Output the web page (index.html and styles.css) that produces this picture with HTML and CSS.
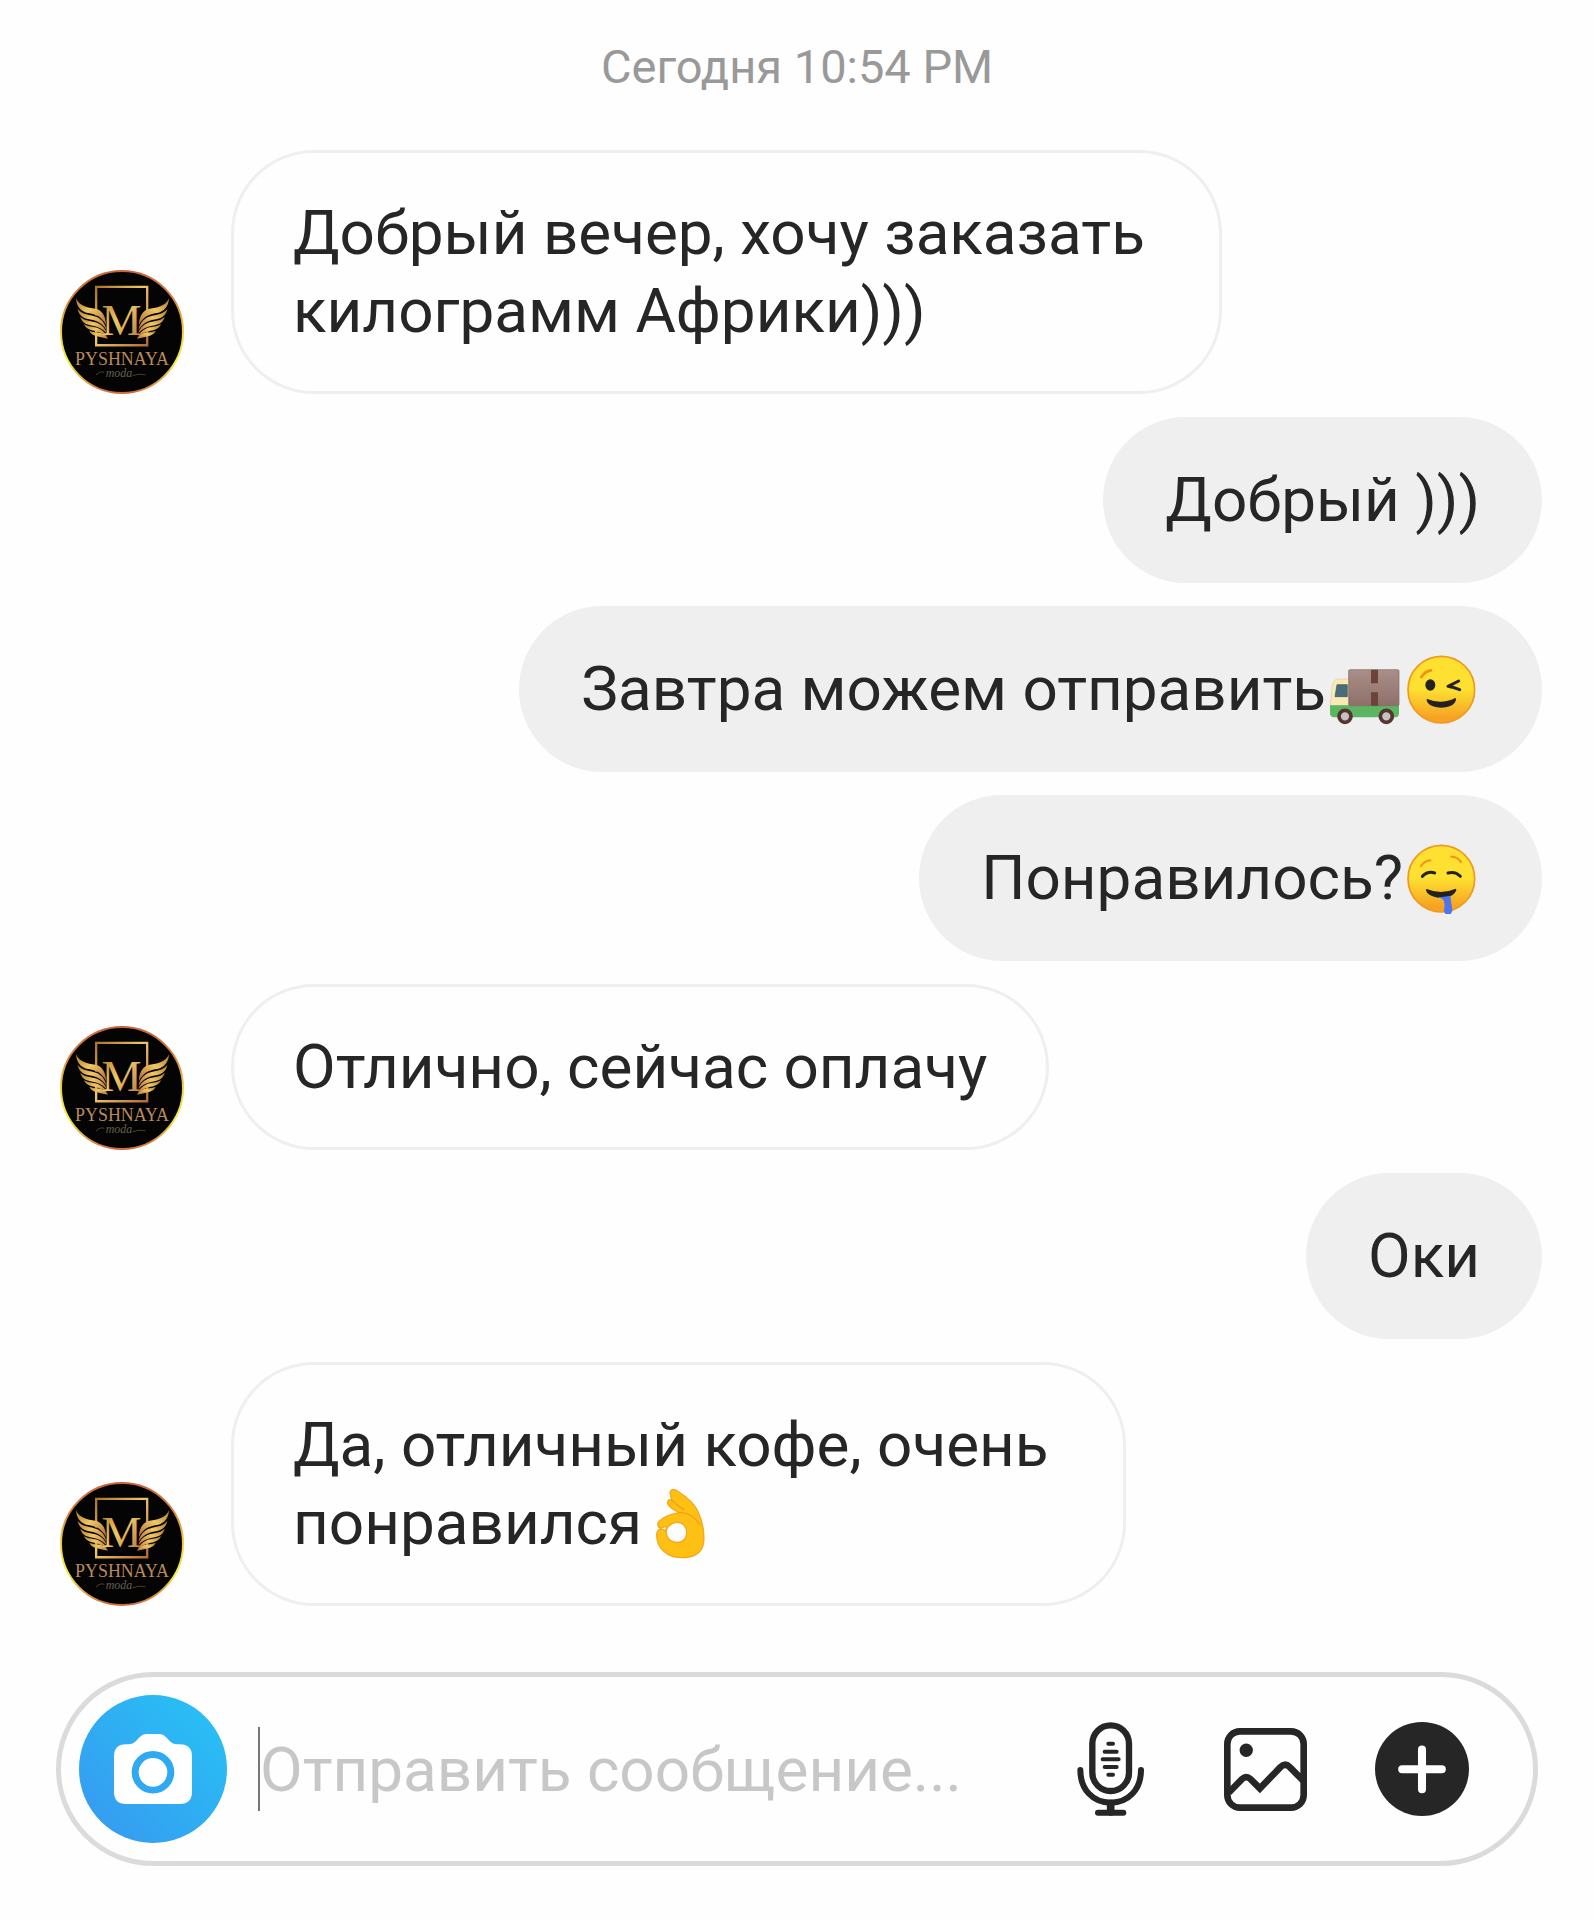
FILE: index.html
```html
<!DOCTYPE html>
<html lang="ru">
<head>
    <meta charset="UTF-8">
    <meta name="viewport" content="width=device-width, initial-scale=1.0">
    <title>Сообщения</title>
    <link rel="stylesheet" href="styles.css">
</head>
<body>

    <!-- shapes and gradients shared by the avatars and emoji -->
    <svg class="sprite" aria-hidden="true">
        <defs>
            <linearGradient id="ring" x1="0" y1="0" x2="0" y2="1">
                <stop offset="0" stop-color="#c8643c"/>
                <stop offset=".25" stop-color="#d9853c"/>
                <stop offset=".5" stop-color="#f0d040"/>
                <stop offset=".75" stop-color="#f2ef3c"/>
                <stop offset="1" stop-color="#cf6a3c"/>
            </linearGradient>
            <linearGradient id="gold" x1="0" y1="0" x2="1" y2="1">
                <stop offset="0" stop-color="#a8742c"/>
                <stop offset=".45" stop-color="#f0c765"/>
                <stop offset="1" stop-color="#b36b33"/>
            </linearGradient>
            <linearGradient id="face" x1="0" y1="0" x2="0" y2="1">
                <stop offset=".5" stop-color="#fde030"/>
                <stop offset=".92" stop-color="#f7a223"/>
            </linearGradient>
            <linearGradient id="cargo" x1="0" y1="0" x2="0" y2="1">
                <stop offset="0" stop-color="#a98f88"/>
                <stop offset="1" stop-color="#8d7069"/>
            </linearGradient>
        </defs>
        <symbol id="logo" viewBox="28 28 374 374">
            <circle cx="215" cy="215" r="184" fill="#050404" stroke="url(#ring)" stroke-width="6"/>
            <path d="M137 165V79H291V158M137 205V255H291V205" fill="none" stroke="url(#gold)" stroke-width="7"/>
            <g id="wing" fill="url(#gold)">
                <path d="M76 113C88 138 110 140 135 145C157 150 166 169 167 194C152 166 135 163 113 158C91 153 78 139 76 113Z"/>
                <path d="M81 145C94 164 119 162 139 170C156 178 166 193 168 208C151 184 133 180 112 176C95 172 84 162 81 145Z"/>
                <path d="M89 169C104 184 123 180 141 188C157 196 166 206 169 219C151 201 134 197 117 194C102 191 93 183 89 169Z"/>
                <path d="M100 191C115 201 130 197 146 205C158 211 166 219 170 229C153 217 138 213 124 210C112 207 104 201 100 191Z"/>
                <path d="M116 211C129 217 141 214 153 219C163 223 169 228 173 235C157 231 145 230 134 226C125 223 119 218 116 211Z"/>
            </g>
            <use href="#wing" transform="translate(433 0) scale(-1 1)"/>
            <path d="M136 345q14-14 26-8M246 347q20-8 40-3" fill="none" stroke="#66604f" stroke-width="2"/>
        </symbol>
    </svg>

    <time class="date">Сегодня 10:54 PM</time>

    <main class="chat">
        <div class="row">
            <svg class="avatar" viewBox="28 28 374 374" role="img" aria-label="Pyshnaya moda">
                <use href="#logo" x="28" y="28" width="374" height="374"/>
                <text class="logo-letter" x="214" y="224" text-anchor="middle">M</text>
                <text class="logo-name" x="215" y="316" text-anchor="middle">PYSHNAYA</text>
                <text class="logo-sub" x="206" y="350" text-anchor="middle">moda</text>
            </svg>
            <p class="msg">Добрый вечер, хочу заказать&nbsp;<br>килограмм Африки)))</p>
        </div>

        <div class="row own">
            <p class="msg">Добрый )))</p>
        </div>

        <div class="row own">
            <p class="msg">Завтра можем отправить<svg class="emoji" viewBox="45 40 231 210" role="img" aria-label="Грузовик">
                    <path d="M58 190L64 130Q67 112 82 112H115V192H58Z" fill="#fbe9b5" stroke="#e0cd98" stroke-width="2"/>
                    <path d="M78 129H109V165H72Z" fill="#4a6b78" stroke="#33505c" stroke-width="2"/>
                    <path d="M57 191H264V214Q264 227 252 227H70Q57 227 57 214Z" fill="#5cb563"/>
                    <rect x="113" y="84" width="151" height="108" rx="4" fill="url(#cargo)" stroke="#806760" stroke-width="2"/>
                    <path d="M180 84h21v41h-21zM180 152h21v40h-21z" fill="#6b4437"/>
                    <g fill="#c9c1c1" stroke="#55352f" stroke-width="11">
                        <circle cx="102" cy="224" r="18"/>
                        <circle cx="226" cy="224" r="18"/>
                    </g>
                </svg><svg class="emoji" viewBox="279 40 231 210" role="img" aria-label="Подмигивание">
                    <circle cx="394" cy="144" r="100" fill="url(#face)" stroke="#ef9a1e" stroke-width="5"/>
                    <path d="M334 106Q345 89 363 86" fill="none" stroke="#ef9317" stroke-width="8" stroke-linecap="round"/>
                    <ellipse cx="361" cy="130" rx="15" ry="17" fill="#25211c"/>
                    <path d="M446 118L414 134Q430 137 449 144" fill="none" stroke="#25211c" stroke-width="9" stroke-linecap="round" stroke-linejoin="round"/>
                    <path d="M352 172Q394 190 436 169Q441 172 434 183Q424 197 394 198Q364 197 353 183Q347 171 352 172Z" fill="#25211c"/>
                </svg></p>
        </div>

        <div class="row own">
            <p class="msg">Понравилось?<svg class="emoji" viewBox="39 48 231 210" role="img" aria-label="Слюнки текут">
                    <circle cx="154" cy="152" r="100" fill="url(#face)" stroke="#ef9a1e" stroke-width="5"/>
                    <path d="M93 114Q103 98 121 97M184 86Q203 87 213 102" fill="none" stroke="#ef9a1e" stroke-width="7" stroke-linecap="round"/>
                    <path d="M97 145Q114 128 134 135M174 135Q196 129 211 145" fill="none" stroke="#25211c" stroke-width="9" stroke-linecap="round"/>
                    <path d="M110 183Q154 201 197 182Q202 185 194 195Q182 210 154 210Q126 209 112 195Q105 184 110 183Z" fill="#25211c"/>
                    <path d="M143 208Q163 207 181 203Q183 221 187 245Q187 260 174 260Q162 260 162 247Q166 226 160 215Q152 210 143 208Z" fill="#4e74ee"/>
                </svg></p>
        </div>

        <div class="row">
            <svg class="avatar" viewBox="28 28 374 374" role="img" aria-label="Pyshnaya moda">
                <use href="#logo" x="28" y="28" width="374" height="374"/>
                <text class="logo-letter" x="214" y="224" text-anchor="middle">M</text>
                <text class="logo-name" x="215" y="316" text-anchor="middle">PYSHNAYA</text>
                <text class="logo-sub" x="206" y="350" text-anchor="middle">moda</text>
            </svg>
            <p class="msg">Отлично, сейчас оплачу</p>
        </div>

        <div class="row own">
            <p class="msg">Оки</p>
        </div>

        <div class="row">
            <svg class="avatar" viewBox="28 28 374 374" role="img" aria-label="Pyshnaya moda">
                <use href="#logo" x="28" y="28" width="374" height="374"/>
                <text class="logo-letter" x="214" y="224" text-anchor="middle">M</text>
                <text class="logo-name" x="215" y="316" text-anchor="middle">PYSHNAYA</text>
                <text class="logo-sub" x="206" y="350" text-anchor="middle">moda</text>
            </svg>
            <p class="msg">Да, отличный кофе, очень&nbsp;<br>понравился<svg class="emoji" viewBox="32 51 231 210" role="img" aria-label="Отлично">
                    <path fill-rule="evenodd" d="M116 61C119 50 129 51 138 57C174 79 193 99 203 126C214 153 220 178 217 211C213 242 190 257 149 257C108 257 76 229 76 189C76 170 92 168 103 176C110 151 98 170 88 168C78 166 76 154 84 147C101 132 121 125 144 122C131 115 116 108 110 97C106 87 113 80 121 84ZM119 157C94 172 103 211 139 211C176 211 175 151 138 151C130 151 124 153 119 157Z" fill="#ffc014" stroke="#f3a91a" stroke-width="4" stroke-linejoin="round"/>
                    <path d="M121 84Q138 101 158 113M144 122Q179 119 207 158" fill="none" stroke="#eda01a" stroke-width="4" stroke-linecap="round"/>
                </svg></p>
        </div>
    </main>

    <form class="composer">
        <button class="camera" type="button" aria-label="Камера">
            <svg viewBox="0 0 236 212">
                <path d="M36 31H46Q57 31 65 23L78 9Q86 0 98 0H138Q149 0 157 9L170 23Q177 31 189 31H199Q236 31 236 67V176Q236 212 199 212H36Q0 212 0 176V67Q0 31 36 31Z" fill="#fff"/>
                <circle cx="118" cy="116" r="54" fill="none" stroke="#2fa9f1" stroke-width="21"/>
            </svg>
        </button>
        <div class="field">
            <input type="text" placeholder="Отправить сообщение..." aria-label="Отправить сообщение">
        </div>
        <div class="tools">
            <button type="button" aria-label="Голосовое сообщение">
                <svg class="mic" viewBox="80 64 201 282" fill="none" stroke="#262626" stroke-linecap="round">
                    <rect x="126" y="74" width="110" height="197" rx="55" stroke-width="19"/>
                    <path d="M90 208C90 266 127 306 181 306S272 266 272 208" stroke-width="18"/>
                    <path d="M181 308V334" stroke-width="23"/>
                    <path d="M143 336H219" stroke-width="18"/>
                    <path d="M174 129H188M163 153H199M157 176H205M163 199H199M174 222H188" stroke-width="12"/>
                </svg>
            </button>
            <button type="button" aria-label="Галерея">
                <svg class="picture" viewBox="522 80 250 250" fill="none" stroke="#262626">
                    <rect x="532" y="90" width="230" height="230" rx="38" stroke-width="20"/>
                    <circle cx="589" cy="147" r="20" fill="#262626" stroke="none"/>
                    <path d="M536 275L576 234Q589 222 602 234L630 262L692 198Q706 184 720 198L760 238" stroke-width="20"/>
                </svg>
            </button>
            <button type="button" aria-label="Добавить">
                <svg class="plus" viewBox="0 0 280 280">
                    <circle cx="140" cy="140" r="140" fill="#262626"/>
                    <path d="M140 82V200M81 141H199" stroke="#fff" stroke-width="24" stroke-linecap="round"/>
                </svg>
            </button>
        </div>
    </form>

</body>
</html>
```
FILE: styles.css
```css
body,p{
    margin: 0;
    padding: 0;
}
body{
    background: #fefefe;
    color: #262626;
    font-family: Roboto, "Noto Sans", sans-serif;
    font-size: 62px;
    line-height: 78px;
}
button,input{
    margin: 0;
    padding: 0;
    border: none;
    background: none;
    font: inherit;
    color: inherit;
}
button{
    cursor: pointer;
}
svg{
    display: block;
}
.sprite{
    position: absolute;
    width: 0;
    height: 0;
}

/* messages */
.date{
    display: block;
    padding: 40px 0 56px;
    font-size: 47px;
    line-height: 54px;
    text-align: center;
    color: #999;
}
.chat{
    display: flex;
    flex-direction: column;
    gap: 23px;
    padding: 0 52px 66px 60px;
}
.row{
    display: flex;
    align-items: flex-end;
    gap: 47px;
}
.own{
    justify-content: flex-end;
}
.avatar{
    flex: none;
    width: 124px;
    height: 124px;
}
.logo-letter,.logo-name,.logo-sub{
    font-family: "Liberation Serif", serif;
    fill: url(#gold);
}
.logo-letter{
    font-size: 136px;
}
.logo-name{
    font-size: 54px;
    fill: #b98a5c;
}
.logo-sub{
    font-size: 36px;
    font-style: italic;
    fill: #66604f;
}
.msg{
    padding: 41px 59px;
    border: 3px solid #efefef;
    border-radius: 83px;
}
.own .msg{
    background: #efefef;
}
.emoji{
    display: inline-block;
    width: 77px;
    height: 70px;
    vertical-align: -15px;
}

/* input bar */
.composer{
    display: flex;
    align-items: center;
    margin: 0 56px 54px;
    padding: 18px 64px 18px 18px;
    border: 5px solid #dbdbdb;
    border-radius: 98px;
}
.camera{
    display: flex;
    align-items: center;
    justify-content: center;
    flex: none;
    width: 148px;
    height: 148px;
    border-radius: 50%;
    background: linear-gradient(45deg, #3897f0, #27c4f5);
}
.camera svg{
    width: 78px;
    height: 70px;
}
.field{
    flex: 1;
    min-width: 0;
    margin-left: 31px;
    border-left: 2px solid #777;
}
.field input{
    display: block;
    width: 100%;
    height: 84px;
    outline: none;
}
.field input::placeholder{
    color: #c7c7c7;
    opacity: 1;
}
.tools{
    display: flex;
    align-items: center;
    gap: 68px;
}
.mic{
    width: 67px;
    height: 94px;
    margin-right: 12px;
}
.picture{
    width: 83px;
    height: 83px;
}
.plus{
    width: 94px;
    height: 94px;
}
```
